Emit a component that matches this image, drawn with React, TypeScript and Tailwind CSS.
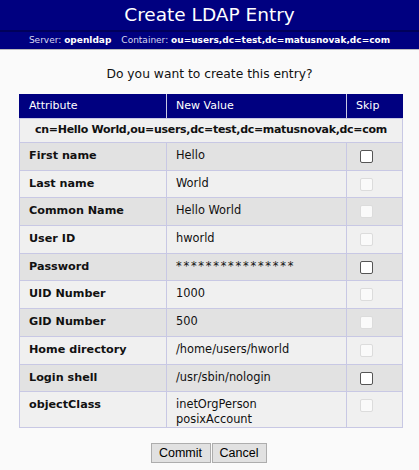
import React from 'react';

type Row = {
  label: string;
  value: string[];
  enabled: boolean;
};

const rows: Row[] = [
  { label: 'First name', value: ['Hello'], enabled: true },
  { label: 'Last name', value: ['World'], enabled: false },
  { label: 'Common Name', value: ['Hello World'], enabled: false },
  { label: 'User ID', value: ['hworld'], enabled: false },
  { label: 'Password', value: ['****************'], enabled: true },
  { label: 'UID Number', value: ['1000'], enabled: false },
  { label: 'GID Number', value: ['500'], enabled: false },
  { label: 'Home directory', value: ['/home/users/hworld'], enabled: false },
  { label: 'Login shell', value: ['/usr/sbin/nologin'], enabled: true },
  { label: 'objectClass', value: ['inetOrgPerson', 'posixAccount'], enabled: false },
];

function Checkbox({ enabled }: { enabled: boolean }) {
  return (
    <div
      className={
        enabled
          ? 'w-[13px] h-[13px] rounded-[2px] border border-[#555] bg-white'
          : 'w-[13px] h-[13px] rounded-[2px] border border-[#dcdcdc] bg-[#fafafa]'
      }
    />
  );
}

export default function App() {
  return (
    <div className="w-[419px] h-[470px] bg-[#fafafa] font-['DejaVu_Sans',Verdana,sans-serif] text-[#111]">
      {/* title */}
      <div className="h-[30px] bg-[#000080] text-white text-[18.5px] leading-[30px] text-center">
        Create LDAP Entry
      </div>
      <div className="h-[2px] bg-[#00005a]" />
      <div className="h-[18px] bg-[#000080] border-b border-[#bbb] text-[9px] leading-[17px] text-center text-[#d8d8f0] whitespace-nowrap">
        Server: <b className="text-white">openldap</b>
        <span className="ml-[10px]">Container: </span>
        <b className="text-white">ou=users,dc=test,dc=matusnovak,dc=com</b>
      </div>

      <div className="text-center text-[12.3px] mt-[16px] mb-[12px] leading-[16px]">
        Do you want to create this entry?
      </div>

      <table className="ml-[19px] w-[383px] border-collapse table-fixed">
        <colgroup>
          <col className="w-[147px]" />
          <col className="w-[180px]" />
          <col className="w-[56px]" />
        </colgroup>
        <thead>
          <tr className="h-[24px] bg-[#000080] text-white text-[11px]">
            <td className="border border-[#c8c8e4] border-t-[#000080] border-l-[#000080] pl-[9px] align-middle">Attribute</td>
            <td className="border border-[#c8c8e4] border-t-[#000080] pl-[9px] align-middle">New Value</td>
            <td className="border border-[#c8c8e4] border-t-[#000080] border-r-[#000080] pl-[9px] align-middle">Skip</td>
          </tr>
        </thead>
        <tbody>
          <tr className="h-[24px] bg-[#f0f0f0]">
            <td colSpan={3} className="border border-[#c8c8e4] text-center font-bold text-[11px] tracking-[-0.3px] whitespace-nowrap">
              cn=Hello World,ou=users,dc=test,dc=matusnovak,dc=com
            </td>
          </tr>
          {rows.map((r, i) => (
            <tr
              key={r.label}
              className={(i % 2 === 0 ? 'bg-[#e2e2e2]' : 'bg-[#f0f0f0]') + (r.value.length > 1 ? ' h-[36px]' : ' h-[27.7px]')}
            >
              <td className="border border-[#c8c8e4] pl-[9px] pt-[5px] align-top font-bold text-[11.2px] leading-[15px]">
                {r.label}
              </td>
              <td
                className={
                  'border border-[#c8c8e4] pl-[9px] pt-[5px] align-top text-[11.4px] leading-[15px]' +
                  (r.label === 'Password' ? ' tracking-[1.75px]' : '')
                }
              >
                {r.value.map((v) => (
                  <div key={v}>{v}</div>
                ))}
              </td>
              <td className="border border-[#c8c8e4] pl-[13px] pt-[7px] align-top">
                <Checkbox enabled={r.enabled} />
              </td>
            </tr>
          ))}
        </tbody>
      </table>

      <div className="flex justify-center gap-[1px] mt-[15px] pr-[2px]">
        <button className="w-[60px] h-[20px] bg-[#e1e1e1] border border-[#adadad] text-[12.5px] leading-[18px] text-black font-['Liberation_Sans',Tahoma,sans-serif]">
          Commit
        </button>
        <button className="w-[55px] h-[20px] bg-[#e1e1e1] border border-[#adadad] text-[12.5px] leading-[18px] text-black font-['Liberation_Sans',Tahoma,sans-serif]">
          Cancel
        </button>
      </div>
    </div>
  );
}
